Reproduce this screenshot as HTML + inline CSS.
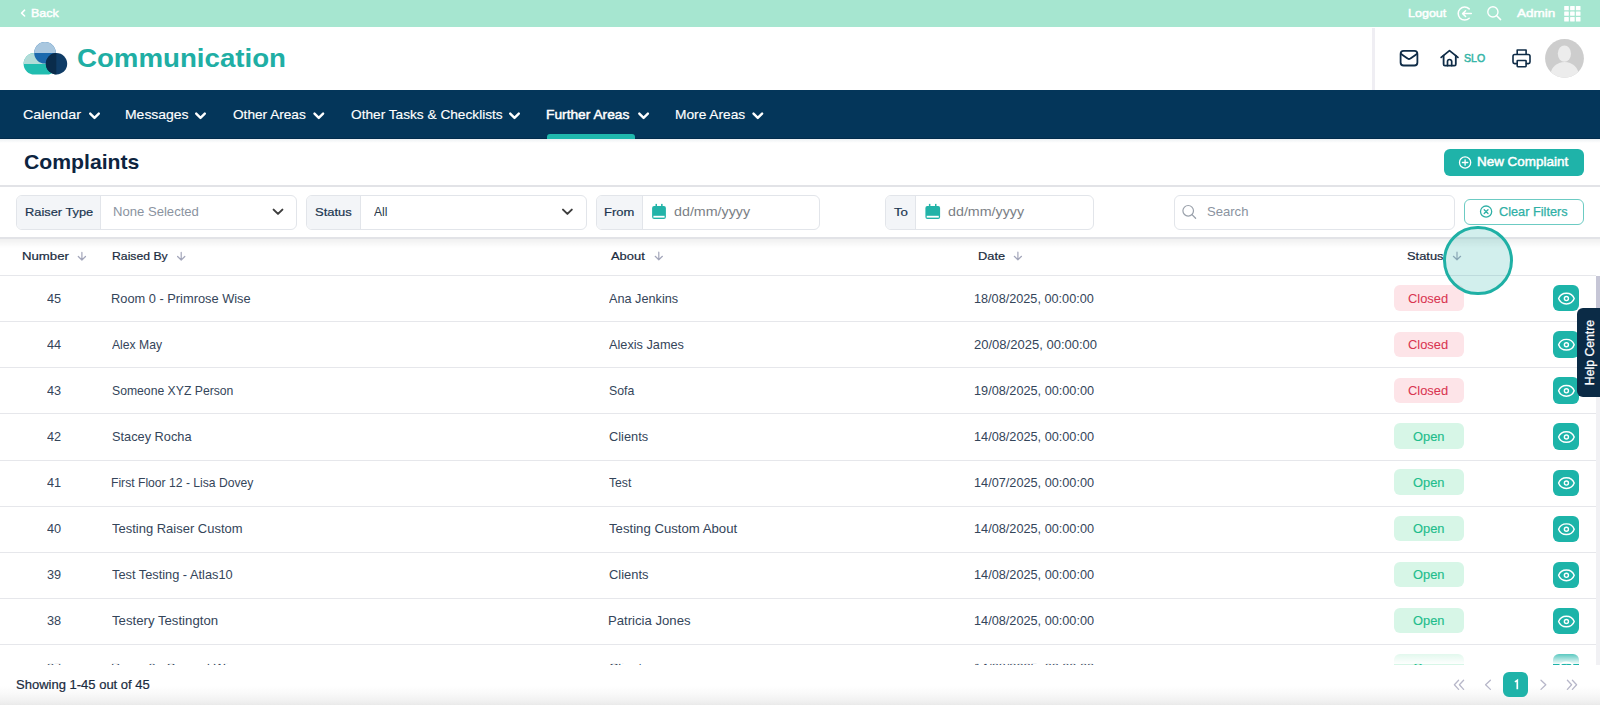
<!DOCTYPE html>
<html><head><meta charset="utf-8"><title>Complaints</title>
<style>
*{margin:0;padding:0;box-sizing:border-box}
html,body{width:1600px;height:705px;overflow:hidden;background:#fff;font-family:'Liberation Sans',sans-serif}
.a{position:absolute}
.t{position:absolute;line-height:0;white-space:nowrap;transform-origin:0 0;z-index:5}
.fb{position:absolute;top:195px;height:35px;border:1px solid #e2e5ea;border-radius:6px;background:#fff}
.fl{position:absolute;left:0;top:0;bottom:0;background:#f3f5f8;border-right:1px solid #e2e5ea;border-radius:5px 0 0 5px}
.rl{position:absolute;left:0;width:1596px;height:1px;background:#e6e7eb}
.bdg{position:absolute;left:1394px;width:70px;height:25.5px;border-radius:6px}
.eye{position:absolute;left:1553.3px;width:26px;height:26.3px;border-radius:6px;background:#1db4a9}
svg{position:absolute;overflow:visible}
</style></head><body>

<!-- ===== top utility bar ===== -->
<div class="a" style="left:0;top:0;width:1600px;height:27px;background:#a6e6d0"></div>
<svg style="left:0;top:0" width="1600" height="27" viewBox="0 0 1600 27" fill="none" stroke="#fff" stroke-linecap="round" stroke-linejoin="round">
  <path d="M24.6 10.2 L21.6 13.1 L24.6 16" stroke-width="1.6"/>
  <!-- logout -->
  <path d="M1469.2 8.9 A6.5 6.5 0 1 0 1469.2 18.3" stroke-width="1.5"/>
  <path d="M1471.3 13.6 H1462.8 M1465.6 10.7 L1462.6 13.6 L1465.6 16.5" stroke-width="1.5"/>
  <!-- search -->
  <circle cx="1492.9" cy="11.9" r="5.1" stroke-width="1.4"/>
  <path d="M1496.7 15.8 L1500.6 19.6" stroke-width="1.5"/>
  <!-- grid -->
  <g fill="#fff" stroke="none">
    <rect x="1564.2" y="5.9" width="4.6" height="4.3" rx="0.5"/><rect x="1570.1" y="5.9" width="4.6" height="4.3" rx="0.5"/><rect x="1575.9" y="5.9" width="4.6" height="4.3" rx="0.5"/>
    <rect x="1564.2" y="11.5" width="4.6" height="4.3" rx="0.5"/><rect x="1570.1" y="11.5" width="4.6" height="4.3" rx="0.5"/><rect x="1575.9" y="11.5" width="4.6" height="4.3" rx="0.5"/>
    <rect x="1564.2" y="17.1" width="4.6" height="4.3" rx="0.5"/><rect x="1570.1" y="17.1" width="4.6" height="4.3" rx="0.5"/><rect x="1575.9" y="17.1" width="4.6" height="4.3" rx="0.5"/>
  </g>
</svg>

<!-- ===== header ===== -->
<div class="a" style="left:1372px;top:28px;width:3px;height:62px;background:#efeef3"></div>
<svg style="left:0;top:0" width="100" height="90" viewBox="0 0 100 90">
  <defs>
    <clipPath id="cTop"><rect x="0" y="0" width="100" height="53"/></clipPath>
    <clipPath id="cBot"><rect x="0" y="53" width="100" height="40"/></clipPath>
    <clipPath id="pTop"><rect x="0" y="0" width="100" height="63.9"/></clipPath>
    <clipPath id="pBot"><rect x="0" y="63.9" width="100" height="30"/></clipPath>
    <clipPath id="dL"><rect x="0" y="0" width="56.3" height="90"/></clipPath>
    <clipPath id="dR"><rect x="56.3" y="0" width="50" height="90"/></clipPath>
  </defs>
  <rect x="23.6" y="53" width="34" height="21.6" rx="10.8" fill="#21bdb0"/>
  <rect x="23.6" y="53" width="34" height="21.6" rx="10.8" fill="#b2dcd8" clip-path="url(#pTop)"/>
  <circle cx="45" cy="52.8" r="10.8" fill="#1b69ad"/>
  <circle cx="45" cy="52.8" r="10.8" fill="#a9c7df" clip-path="url(#cTop)"/>
  <circle cx="56.5" cy="63.8" r="10.7" fill="#0f3c66"/>
  <circle cx="56.5" cy="63.8" r="10.7" fill="#0a2c4b" clip-path="url(#dL)"/>
</svg>
<svg style="left:0;top:0" width="1600" height="90" viewBox="0 0 1600 90" fill="none" stroke="#0f2c47" stroke-linecap="round" stroke-linejoin="round">
  <!-- mail -->
  <rect x="1400.6" y="50.9" width="16.8" height="14.6" rx="3" stroke-width="1.8"/>
  <path d="M1401.2 53.9 C1403.8 55.8 1406.4 57.7 1407.7 58.6 Q1409 59.4 1410.3 58.6 C1411.6 57.7 1414.2 55.8 1416.8 53.9" stroke-width="1.8"/>
  <!-- house -->
  <path d="M1441.2 57.4 L1449.5 50.6 L1457.9 57.4" stroke-width="1.8"/>
  <path d="M1443.6 55.6 V64.2 Q1443.6 65.6 1445 65.6 H1454.4 Q1455.8 65.6 1455.8 64.2 V55.6" stroke-width="1.8"/>
  <path d="M1447.5 65.6 V61.6 A2.1 2.1 0 0 1 1451.7 61.6 V65.6" stroke-width="1.7"/>
  <!-- printer -->
  <path d="M1517.2 54 V50 H1526.1 V54" stroke-width="1.6"/>
  <path d="M1516.6 63.6 H1514.6 Q1513 63.6 1513 62 V56.2 Q1513 54.5 1514.7 54.5 H1528.3 Q1530 54.5 1530 56.2 V62 Q1530 63.6 1528.4 63.6 H1526.4" stroke-width="1.6"/>
  <rect x="1517.2" y="60.5" width="8.9" height="6.2" rx="0.6" stroke-width="1.6"/>
</svg>
<svg style="left:1545px;top:39px" width="39" height="39" viewBox="0 0 39 39">
  <defs><clipPath id="av"><circle cx="19.5" cy="19.4" r="19.4"/></clipPath></defs>
  <circle cx="19.5" cy="19.4" r="19.4" fill="#cdcdcd"/>
  <g clip-path="url(#av)">
    <ellipse cx="19.4" cy="14.6" rx="6.6" ry="8.2" fill="#ececec"/>
    <ellipse cx="19.6" cy="36" rx="14" ry="13" fill="#ececec"/>
  </g>
</svg>

<!-- ===== nav ===== -->
<div class="a" style="left:0;top:90px;width:1600px;height:49px;background:#04365a"></div>
<div class="a" style="left:0;top:138px;width:1600px;height:1px;background:#022c4c"></div>
<div class="a" style="left:0;top:139px;width:1600px;height:4px;background:linear-gradient(rgba(3,54,90,0.07),rgba(3,54,90,0))"></div>
<div class="a" style="left:547px;top:134px;width:88px;height:5px;background:#1fb8ad;border-radius:3px 3px 0 0"></div>
<svg style="left:0;top:0" width="1600" height="140" viewBox="0 0 1600 140" fill="none" stroke="#fff" stroke-width="2.4" stroke-linecap="round" stroke-linejoin="round">
  <path d="M90.2 113.6 L94.5 117.9 L98.8 113.6"/>
  <path d="M196.2 113.6 L200.5 117.9 L204.8 113.6"/>
  <path d="M314.5 113.6 L318.8 117.9 L323.1 113.6"/>
  <path d="M510.2 113.6 L514.5 117.9 L518.8 113.6"/>
  <path d="M639.3 113.6 L643.6 117.9 L647.9 113.6"/>
  <path d="M753.5 113.6 L757.8 117.9 L762.1 113.6"/>
</svg>

<!-- ===== title row ===== -->
<div class="a" style="left:1444px;top:149.2px;width:140px;height:26.6px;background:#1fb3a9;border-radius:6px"></div>
<svg style="left:0;top:0" width="1600" height="180" viewBox="0 0 1600 180" fill="none" stroke="#fff" stroke-linecap="round">
  <circle cx="1465.1" cy="162.5" r="5.6" stroke-width="1.3"/>
  <path d="M1465.1 159.8 V165.2 M1462.4 162.5 H1467.8" stroke-width="1.3"/>
</svg>

<!-- ===== filter bar ===== -->
<div class="a" style="left:0;top:185px;width:1600px;height:54px;background:#fff;border-top:2px solid #e2e3e7;border-bottom:2px solid #e2e3e7"></div>
<div class="a" style="left:0;top:239px;width:1600px;height:9px;background:linear-gradient(rgba(0,0,0,0.06),rgba(0,0,0,0))"></div>
<div class="fb" style="left:16px;width:281px"><div class="fl" style="width:84px"></div></div>
<div class="fb" style="left:305.5px;width:281px"><div class="fl" style="width:54px"></div></div>
<div class="fb" style="left:595.5px;width:224px"><div class="fl" style="width:46.5px"></div></div>
<div class="fb" style="left:885.2px;width:208.8px"><div class="fl" style="width:30.3px"></div></div>
<div class="fb" style="left:1174.3px;width:281px"></div>
<div class="a" style="left:1464.2px;top:198.7px;width:119.7px;height:26.2px;border:1.3px solid #6ccbc3;border-radius:6px"></div>
<svg style="left:0;top:0" width="1600" height="240" viewBox="0 0 1600 240" fill="none" stroke-linecap="round" stroke-linejoin="round">
  <path d="M273.6 209.6 L278 213.9 L282.4 209.6" stroke="#3d3d3d" stroke-width="2"/>
  <path d="M563 209.6 L567.4 213.9 L571.8 209.6" stroke="#3d3d3d" stroke-width="2"/>
  <!-- calendars -->
  <g fill="#22b3a8" stroke="none">
    <path d="M652.1 208.1 Q652.1 206.1 654.1 206.1 H663.9 Q665.9 206.1 665.9 208.1 V217.1 Q665.9 219.1 663.9 219.1 H654.1 Q652.1 219.1 652.1 217.1 Z"/>
    <rect x="655.5" y="203.9" width="1.5" height="3"/><rect x="661.1" y="203.9" width="1.5" height="3"/>
    <path d="M925.4 208.1 Q925.4 206.1 927.4 206.1 H938.1 Q940.1 206.1 940.1 208.1 V217.1 Q940.1 219.1 938.1 219.1 H927.4 Q925.4 219.1 925.4 217.1 Z"/>
    <rect x="928.9" y="203.9" width="1.5" height="3"/><rect x="935" y="203.9" width="1.5" height="3"/>
  </g>
  <rect x="653.4" y="215.8" width="11.2" height="1.8" fill="#fff" stroke="none"/>
  <rect x="926.7" y="215.8" width="12.1" height="1.8" fill="#fff" stroke="none"/>
  <!-- search -->
  <circle cx="1188.2" cy="210.8" r="5.3" stroke="#9aa1ab" stroke-width="1.2"/>
  <path d="M1192 214.6 L1195.6 218.2" stroke="#9aa1ab" stroke-width="1.3"/>
  <!-- clear x -->
  <circle cx="1486.1" cy="211.6" r="5.6" stroke="#2fb0a6" stroke-width="1.3"/>
  <path d="M1484.2 209.7 L1488 213.5 M1488 209.7 L1484.2 213.5" stroke="#2fb0a6" stroke-width="1.3"/>
</svg>

<!-- ===== table ===== -->
<div class="rl" style="top:275px;height:1.3px"></div>
<div class="rl" style="top:321.1px"></div>
<div class="rl" style="top:367.2px"></div>
<div class="rl" style="top:413.4px"></div>
<div class="rl" style="top:459.5px"></div>
<div class="rl" style="top:505.6px"></div>
<div class="rl" style="top:551.7px"></div>
<div class="rl" style="top:597.9px"></div>
<div class="rl" style="top:644px"></div>
<svg style="left:0;top:0" width="1600" height="275" viewBox="0 0 1600 275" fill="none" stroke="#a3a6ba" stroke-width="1.2" stroke-linecap="round" stroke-linejoin="round">
<path d="M81.9 252.4 V260.0 M78.30000000000001 256.5 L81.9 260.0 L85.5 256.5"/>
<path d="M181.2 252.4 V260.0 M177.6 256.5 L181.2 260.0 L184.79999999999998 256.5"/>
<path d="M658.8 252.2 V259.8 M655.1999999999999 256.3 L658.8 259.8 L662.4 256.3"/>
<path d="M1017.9 252.2 V259.8 M1014.3 256.3 L1017.9 259.8 L1021.5 256.3"/>
<path d="M1457 252.2 V259.8 M1453.4 256.3 L1457 259.8 L1460.6 256.3"/>
</svg>
<div class="bdg" style="top:285.40px;background:#fde4e8"></div>
<div class="eye" style="top:285.10px"></div>
<svg style="left:0;top:0;z-index:6" width="1600" height="705" viewBox="0 0 1600 705" fill="none" stroke="#fff" stroke-width="1.45"><path d="M1558.6 298.60 C1561.2 291.50 1571.6 291.50 1574.2 298.60 C1571.6 305.70 1561.2 305.70 1558.6 298.60 Z" stroke-linejoin="round"/><circle cx="1566.4" cy="298.60" r="2.05" stroke-width="1.4"/></svg>
<div class="bdg" style="top:331.52px;background:#fde4e8"></div>
<div class="eye" style="top:331.23px"></div>
<svg style="left:0;top:0;z-index:6" width="1600" height="705" viewBox="0 0 1600 705" fill="none" stroke="#fff" stroke-width="1.45"><path d="M1558.6 344.73 C1561.2 337.62 1571.6 337.62 1574.2 344.73 C1571.6 351.83 1561.2 351.83 1558.6 344.73 Z" stroke-linejoin="round"/><circle cx="1566.4" cy="344.73" r="2.05" stroke-width="1.4"/></svg>
<div class="bdg" style="top:377.65px;background:#fde4e8"></div>
<div class="eye" style="top:377.35px"></div>
<svg style="left:0;top:0;z-index:6" width="1600" height="705" viewBox="0 0 1600 705" fill="none" stroke="#fff" stroke-width="1.45"><path d="M1558.6 390.85 C1561.2 383.75 1571.6 383.75 1574.2 390.85 C1571.6 397.95 1561.2 397.95 1558.6 390.85 Z" stroke-linejoin="round"/><circle cx="1566.4" cy="390.85" r="2.05" stroke-width="1.4"/></svg>
<div class="bdg" style="top:423.27px;background:#d7f6e7"></div>
<div class="eye" style="top:423.48px"></div>
<svg style="left:0;top:0;z-index:6" width="1600" height="705" viewBox="0 0 1600 705" fill="none" stroke="#fff" stroke-width="1.45"><path d="M1558.6 436.98 C1561.2 429.88 1571.6 429.88 1574.2 436.98 C1571.6 444.08 1561.2 444.08 1558.6 436.98 Z" stroke-linejoin="round"/><circle cx="1566.4" cy="436.98" r="2.05" stroke-width="1.4"/></svg>
<div class="bdg" style="top:469.40px;background:#d7f6e7"></div>
<div class="eye" style="top:469.60px"></div>
<svg style="left:0;top:0;z-index:6" width="1600" height="705" viewBox="0 0 1600 705" fill="none" stroke="#fff" stroke-width="1.45"><path d="M1558.6 483.10 C1561.2 476.00 1571.6 476.00 1574.2 483.10 C1571.6 490.20 1561.2 490.20 1558.6 483.10 Z" stroke-linejoin="round"/><circle cx="1566.4" cy="483.10" r="2.05" stroke-width="1.4"/></svg>
<div class="bdg" style="top:515.52px;background:#d7f6e7"></div>
<div class="eye" style="top:515.73px"></div>
<svg style="left:0;top:0;z-index:6" width="1600" height="705" viewBox="0 0 1600 705" fill="none" stroke="#fff" stroke-width="1.45"><path d="M1558.6 529.23 C1561.2 522.12 1571.6 522.12 1574.2 529.23 C1571.6 536.33 1561.2 536.33 1558.6 529.23 Z" stroke-linejoin="round"/><circle cx="1566.4" cy="529.23" r="2.05" stroke-width="1.4"/></svg>
<div class="bdg" style="top:561.65px;background:#d7f6e7"></div>
<div class="eye" style="top:561.85px"></div>
<svg style="left:0;top:0;z-index:6" width="1600" height="705" viewBox="0 0 1600 705" fill="none" stroke="#fff" stroke-width="1.45"><path d="M1558.6 575.35 C1561.2 568.25 1571.6 568.25 1574.2 575.35 C1571.6 582.45 1561.2 582.45 1558.6 575.35 Z" stroke-linejoin="round"/><circle cx="1566.4" cy="575.35" r="2.05" stroke-width="1.4"/></svg>
<div class="bdg" style="top:607.77px;background:#d7f6e7"></div>
<div class="eye" style="top:607.98px"></div>
<svg style="left:0;top:0;z-index:6" width="1600" height="705" viewBox="0 0 1600 705" fill="none" stroke="#fff" stroke-width="1.45"><path d="M1558.6 621.48 C1561.2 614.38 1571.6 614.38 1574.2 621.48 C1571.6 628.58 1561.2 628.58 1558.6 621.48 Z" stroke-linejoin="round"/><circle cx="1566.4" cy="621.48" r="2.05" stroke-width="1.4"/></svg>
<div class="bdg" style="top:653.90px;background:#d7f6e7"></div>
<div class="eye" style="top:654.10px"></div>
<svg style="left:0;top:0;z-index:6" width="1600" height="705" viewBox="0 0 1600 705" fill="none" stroke="#fff" stroke-width="1.45"><path d="M1558.6 667.60 C1561.2 660.50 1571.6 660.50 1574.2 667.60 C1571.6 674.70 1561.2 674.70 1558.6 667.60 Z" stroke-linejoin="round"/><circle cx="1566.4" cy="667.60" r="2.05" stroke-width="1.4"/></svg>

<div class="t" style="left:30.50px;top:12.80px;font-size:11.3px;font-weight:400;color:#ffffff;-webkit-text-stroke:0.45px #ffffff;transform:scaleX(1.1074)">Back</div>
<div class="t" style="left:1407.75px;top:12.75px;font-size:11.3px;font-weight:400;color:#ffffff;-webkit-text-stroke:0.45px #ffffff;transform:scaleX(1.1083)">Logout</div>
<div class="t" style="left:1517.00px;top:12.75px;font-size:11.3px;font-weight:400;color:#ffffff;-webkit-text-stroke:0.45px #ffffff;transform:scaleX(1.1973)">Admin</div>
<div class="t" style="left:77.21px;top:57.80px;font-size:25.3px;font-weight:700;color:#20aea4;transform:scaleX(1.0934)">Communication</div>
<div class="t" style="left:1464.20px;top:57.80px;font-size:11.8px;font-weight:400;color:#35b5a7;-webkit-text-stroke:0.55px #35b5a7;transform:scaleX(0.8963)">SLO</div>
<div class="t" style="left:23.40px;top:114.75px;font-size:13.1px;font-weight:400;color:#ffffff;-webkit-text-stroke:0.15px #ffffff;transform:scaleX(1.0897)">Calendar</div>
<div class="t" style="left:124.93px;top:114.75px;font-size:13.1px;font-weight:400;color:#ffffff;-webkit-text-stroke:0.15px #ffffff;transform:scaleX(1.0655)">Messages</div>
<div class="t" style="left:233.00px;top:114.75px;font-size:13.1px;font-weight:400;color:#ffffff;-webkit-text-stroke:0.15px #ffffff;transform:scaleX(1.0416)">Other Areas</div>
<div class="t" style="left:350.60px;top:114.75px;font-size:13.1px;font-weight:400;color:#ffffff;-webkit-text-stroke:0.15px #ffffff;transform:scaleX(1.0440)">Other Tasks &amp; Checklists</div>
<div class="t" style="left:546.45px;top:114.75px;font-size:13.1px;font-weight:400;color:#ffffff;-webkit-text-stroke:0.45px #ffffff;transform:scaleX(1.0503)">Further Areas</div>
<div class="t" style="left:674.55px;top:114.75px;font-size:13.1px;font-weight:400;color:#ffffff;-webkit-text-stroke:0.15px #ffffff;transform:scaleX(1.0487)">More Areas</div>
<div class="t" style="left:23.75px;top:161.90px;font-size:19.7px;font-weight:700;color:#0d2440;transform:scaleX(1.0765)">Complaints</div>
<div class="t" style="left:1476.70px;top:162.20px;font-size:12.2px;font-weight:400;color:#ffffff;-webkit-text-stroke:0.45px #ffffff;transform:scaleX(1.1028)">New Complaint</div>
<div class="t" style="left:24.50px;top:211.75px;font-size:11.6px;font-weight:400;color:#1b3550;-webkit-text-stroke:0.2px #1b3550;transform:scaleX(1.1073)">Raiser Type</div>
<div class="t" style="left:112.93px;top:211.90px;font-size:12.2px;font-weight:400;color:#8a93a0;transform:scaleX(1.0745)">None Selected</div>
<div class="t" style="left:314.50px;top:211.75px;font-size:11.6px;font-weight:400;color:#1b3550;-webkit-text-stroke:0.2px #1b3550;transform:scaleX(1.1188)">Status</div>
<div class="t" style="left:373.50px;top:211.80px;font-size:12.2px;font-weight:400;color:#2a3a4a;transform:scaleX(0.9894)">All</div>
<div class="t" style="left:604.00px;top:211.75px;font-size:11.6px;font-weight:400;color:#1b3550;-webkit-text-stroke:0.2px #1b3550;transform:scaleX(1.1178)">From</div>
<div class="t" style="left:674.40px;top:211.80px;font-size:12.2px;font-weight:400;color:#7b7f86;transform:scaleX(1.1712)">dd/mm/yyyy</div>
<div class="t" style="left:893.75px;top:211.75px;font-size:11.6px;font-weight:400;color:#1b3550;-webkit-text-stroke:0.2px #1b3550;transform:scaleX(1.1402)">To</div>
<div class="t" style="left:947.80px;top:211.80px;font-size:12.2px;font-weight:400;color:#7b7f86;transform:scaleX(1.1712)">dd/mm/yyyy</div>
<div class="t" style="left:1207.40px;top:212.00px;font-size:12.2px;font-weight:400;color:#8a93a0;transform:scaleX(1.0730)">Search</div>
<div class="t" style="left:1498.90px;top:211.90px;font-size:12.2px;font-weight:400;color:#2fb0a6;-webkit-text-stroke:0.25px #2fb0a6;transform:scaleX(1.0458)">Clear Filters</div>
<div class="t" style="left:21.60px;top:255.80px;font-size:11.3px;font-weight:400;color:#1a2b40;-webkit-text-stroke:0.2px #1a2b40;transform:scaleX(1.1678)">Number</div>
<div class="t" style="left:111.90px;top:255.80px;font-size:11.3px;font-weight:400;color:#1a2b40;-webkit-text-stroke:0.2px #1a2b40;transform:scaleX(1.0822)">Raised By</div>
<div class="t" style="left:611.25px;top:255.80px;font-size:11.3px;font-weight:400;color:#1a2b40;-webkit-text-stroke:0.2px #1a2b40;transform:scaleX(1.1437)">About</div>
<div class="t" style="left:978.25px;top:255.80px;font-size:11.3px;font-weight:400;color:#1a2b40;-webkit-text-stroke:0.2px #1a2b40;transform:scaleX(1.1345)">Date</div>
<div class="t" style="left:1407.20px;top:255.80px;font-size:11.3px;font-weight:400;color:#1a2b40;-webkit-text-stroke:0.2px #1a2b40;transform:scaleX(1.1391)">Status</div>
<div class="t" style="left:46.88px;top:298.60px;font-size:12.4px;font-weight:400;color:#34455a;transform:scaleX(1.0253)">45</div>
<div class="t" style="left:110.77px;top:298.60px;font-size:12.4px;font-weight:400;color:#34455a;transform:scaleX(1.0347)">Room 0 - Primrose Wise</div>
<div class="t" style="left:609.10px;top:298.60px;font-size:12.4px;font-weight:400;color:#34455a;transform:scaleX(1.0237)">Ana Jenkins</div>
<div class="t" style="left:973.80px;top:298.60px;font-size:12.4px;font-weight:400;color:#34455a;transform:scaleX(1.0227)">18/08/2025, 00:00:00</div>
<div class="t" style="left:1408.30px;top:298.50px;font-size:12.5px;font-weight:400;color:#d93551;-webkit-text-stroke:0.06px #d93551;transform:scaleX(1.0319)">Closed</div>
<div class="t" style="left:46.88px;top:344.73px;font-size:12.4px;font-weight:400;color:#34455a;transform:scaleX(1.0253)">44</div>
<div class="t" style="left:111.80px;top:344.73px;font-size:12.4px;font-weight:400;color:#34455a;transform:scaleX(0.9815)">Alex May</div>
<div class="t" style="left:609.10px;top:344.73px;font-size:12.4px;font-weight:400;color:#34455a;transform:scaleX(1.0262)">Alexis James</div>
<div class="t" style="left:973.80px;top:344.73px;font-size:12.4px;font-weight:400;color:#34455a;transform:scaleX(1.0508)">20/08/2025, 00:00:00</div>
<div class="t" style="left:1408.30px;top:344.62px;font-size:12.5px;font-weight:400;color:#d93551;-webkit-text-stroke:0.06px #d93551;transform:scaleX(1.0319)">Closed</div>
<div class="t" style="left:46.88px;top:390.85px;font-size:12.4px;font-weight:400;color:#34455a;transform:scaleX(1.0253)">43</div>
<div class="t" style="left:111.80px;top:390.85px;font-size:12.4px;font-weight:400;color:#34455a;transform:scaleX(0.9847)">Someone XYZ Person</div>
<div class="t" style="left:609.10px;top:390.85px;font-size:12.4px;font-weight:400;color:#34455a;transform:scaleX(0.9923)">Sofa</div>
<div class="t" style="left:973.80px;top:390.85px;font-size:12.4px;font-weight:400;color:#34455a;transform:scaleX(1.0253)">19/08/2025, 00:00:00</div>
<div class="t" style="left:1408.30px;top:390.75px;font-size:12.5px;font-weight:400;color:#d93551;-webkit-text-stroke:0.06px #d93551;transform:scaleX(1.0319)">Closed</div>
<div class="t" style="left:46.88px;top:436.98px;font-size:12.4px;font-weight:400;color:#34455a;transform:scaleX(1.0253)">42</div>
<div class="t" style="left:111.80px;top:436.98px;font-size:12.4px;font-weight:400;color:#34455a;transform:scaleX(1.0304)">Stacey Rocha</div>
<div class="t" style="left:609.10px;top:436.98px;font-size:12.4px;font-weight:400;color:#34455a;transform:scaleX(1.0324)">Clients</div>
<div class="t" style="left:973.80px;top:436.98px;font-size:12.4px;font-weight:400;color:#34455a;transform:scaleX(1.0253)">14/08/2025, 00:00:00</div>
<div class="t" style="left:1412.80px;top:436.88px;font-size:12.5px;font-weight:400;color:#1ebd8c;-webkit-text-stroke:0.15px #1ebd8c;transform:scaleX(1.0285)">Open</div>
<div class="t" style="left:46.88px;top:483.10px;font-size:12.4px;font-weight:400;color:#34455a;transform:scaleX(1.0253)">41</div>
<div class="t" style="left:110.82px;top:483.10px;font-size:12.4px;font-weight:400;color:#34455a;transform:scaleX(0.9801)">First Floor 12 - Lisa Dovey</div>
<div class="t" style="left:609.10px;top:483.10px;font-size:12.4px;font-weight:400;color:#34455a;transform:scaleX(0.9836)">Test</div>
<div class="t" style="left:973.80px;top:483.10px;font-size:12.4px;font-weight:400;color:#34455a;transform:scaleX(1.0253)">14/07/2025, 00:00:00</div>
<div class="t" style="left:1412.80px;top:483.00px;font-size:12.5px;font-weight:400;color:#1ebd8c;-webkit-text-stroke:0.15px #1ebd8c;transform:scaleX(1.0285)">Open</div>
<div class="t" style="left:46.88px;top:529.23px;font-size:12.4px;font-weight:400;color:#34455a;transform:scaleX(1.0253)">40</div>
<div class="t" style="left:111.80px;top:529.23px;font-size:12.4px;font-weight:400;color:#34455a;transform:scaleX(1.0473)">Testing Raiser Custom</div>
<div class="t" style="left:609.10px;top:529.23px;font-size:12.4px;font-weight:400;color:#34455a;transform:scaleX(1.0635)">Testing Custom About</div>
<div class="t" style="left:973.80px;top:529.23px;font-size:12.4px;font-weight:400;color:#34455a;transform:scaleX(1.0253)">14/08/2025, 00:00:00</div>
<div class="t" style="left:1412.80px;top:529.12px;font-size:12.5px;font-weight:400;color:#1ebd8c;-webkit-text-stroke:0.15px #1ebd8c;transform:scaleX(1.0285)">Open</div>
<div class="t" style="left:46.88px;top:575.35px;font-size:12.4px;font-weight:400;color:#34455a;transform:scaleX(1.0253)">39</div>
<div class="t" style="left:111.80px;top:575.35px;font-size:12.4px;font-weight:400;color:#34455a;transform:scaleX(1.0325)">Test Testing - Atlas10</div>
<div class="t" style="left:609.10px;top:575.35px;font-size:12.4px;font-weight:400;color:#34455a;transform:scaleX(1.0404)">Clients</div>
<div class="t" style="left:973.80px;top:575.35px;font-size:12.4px;font-weight:400;color:#34455a;transform:scaleX(1.0253)">14/08/2025, 00:00:00</div>
<div class="t" style="left:1412.80px;top:575.25px;font-size:12.5px;font-weight:400;color:#1ebd8c;-webkit-text-stroke:0.15px #1ebd8c;transform:scaleX(1.0285)">Open</div>
<div class="t" style="left:46.88px;top:621.48px;font-size:12.4px;font-weight:400;color:#34455a;transform:scaleX(1.0253)">38</div>
<div class="t" style="left:111.80px;top:621.48px;font-size:12.4px;font-weight:400;color:#34455a;transform:scaleX(1.0643)">Testery Testington</div>
<div class="t" style="left:608.04px;top:621.48px;font-size:12.4px;font-weight:400;color:#34455a;transform:scaleX(1.0610)">Patricia Jones</div>
<div class="t" style="left:973.80px;top:621.48px;font-size:12.4px;font-weight:400;color:#34455a;transform:scaleX(1.0253)">14/08/2025, 00:00:00</div>
<div class="t" style="left:1412.80px;top:621.38px;font-size:12.5px;font-weight:400;color:#1ebd8c;-webkit-text-stroke:0.15px #1ebd8c;transform:scaleX(1.0285)">Open</div>
<div class="t" style="left:46.88px;top:667.60px;font-size:12.4px;font-weight:400;color:#34455a;transform:scaleX(1.0253)">37</div>
<div class="t" style="left:110.77px;top:667.60px;font-size:12.4px;font-weight:400;color:#34455a;transform:scaleX(1.0253)">Room 0 - Second Wise</div>
<div class="t" style="left:609.10px;top:667.60px;font-size:12.4px;font-weight:400;color:#34455a;transform:scaleX(1.0404)">Clients</div>
<div class="t" style="left:973.80px;top:667.60px;font-size:12.4px;font-weight:400;color:#34455a;transform:scaleX(1.0253)">14/08/2025, 00:00:00</div>
<div class="t" style="left:1412.80px;top:667.50px;font-size:12.5px;font-weight:400;color:#1ebd8c;-webkit-text-stroke:0.15px #1ebd8c;transform:scaleX(1.0285)">Open</div>

<!-- ===== overlays ===== -->
<div class="a" style="left:1443.3px;top:226px;width:69.4px;height:69.4px;border-radius:50%;border:3.9px solid #1fb0a5;background:rgba(31,176,165,0.2);z-index:10"></div>
<div class="a" style="left:1596px;top:275.5px;width:4px;height:389.5px;background:#f1f1f4;z-index:10"></div>
<div class="a" style="left:1596px;top:275.5px;width:4px;height:75px;background:#c6c6d6;z-index:10"></div>
<div class="a" style="left:1576.6px;top:308px;width:23.4px;height:89px;background:#0b2b46;border-radius:6px 0 0 6px;z-index:11"></div>
<div class="a" style="left:0;top:650px;width:1596px;height:14px;background:linear-gradient(rgba(255,255,255,0),rgba(255,255,255,0.96));z-index:12"></div>
<div class="a" style="left:0;top:665px;width:1600px;height:40px;background:linear-gradient(#fff 0,#fff 21px,#f9f9f9 29px,#f1f1f1 36px,#eaeaea 40px);z-index:12"></div>
<div class="a" style="left:1503px;top:672px;width:25px;height:25px;background:#1fb3a9;border-radius:6px;z-index:13"></div>
<svg style="left:0;top:0;z-index:13" width="1600" height="705" viewBox="0 0 1600 705" fill="none" stroke="#b7b7c9" stroke-width="1.3" stroke-linecap="round" stroke-linejoin="round">
  <path d="M1458.6 680.2 L1454.4 684.8 L1458.6 689.4 M1463.6 680.2 L1459.4 684.8 L1463.6 689.4"/>
  <path d="M1490.4 680.2 L1485.6 684.8 L1490.4 689.4"/>
  <path d="M1514.9 681.9 L1517.3 680.4 V689.2" stroke="#fff" stroke-width="1.7" stroke-linecap="butt" stroke-linejoin="miter"/>
  <path d="M1541 680.2 L1545.8 684.8 L1541 689.4"/>
  <path d="M1567.4 680.2 L1571.6 684.8 L1567.4 689.4 M1572.4 680.2 L1576.6 684.8 L1572.4 689.4"/>
</svg>
<div class="t" style="left:16.00px;top:684.60px;font-size:12.2px;font-weight:400;color:#1a2b40;-webkit-text-stroke:0.2px #1a2b40;transform:scaleX(1.0671);z-index:20">Showing 1-45 out of 45</div>
<div class="t" style="left:0;top:0;z-index:20;font-size:13px;font-weight:400;color:#ffffff;-webkit-text-stroke:0.28px #ffffff;transform:translate(1589.80px,385.14px) rotate(-90deg) scaleX(0.9407)">Help Centre</div>
</body></html>
